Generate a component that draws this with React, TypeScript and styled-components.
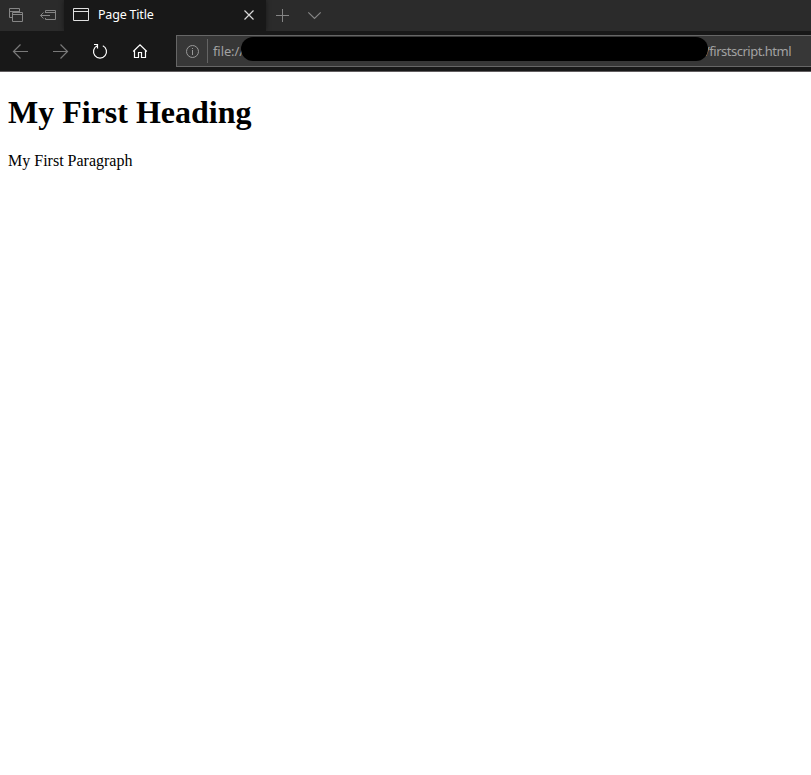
import React from 'react';
import styled, { createGlobalStyle } from 'styled-components';

const GlobalStyle = createGlobalStyle`
  * { box-sizing: border-box; }
  body { margin: 0; background: #fff; overflow: hidden; }
`;

const Browser = styled.div`
  height: 100vh;
  display: flex;
  flex-direction: column;
`;

const TabStrip = styled.div`
  height: 31px;
  flex: none;
  display: flex;
  background: #2b2b2b;
`;

const StripButton = styled.div`
  width: 32px;
  height: 31px;
  flex: none;
`;

const Tab = styled.div`
  width: 202px;
  flex: none;
  display: flex;
  background: #181818;
  box-shadow: 0 0 5px rgba(0, 0, 0, 0.45);
  clip-path: inset(0 -6px);
`;

const TabTitle = styled.span`
  width: 137px;
  padding-left: 2px;
  font: 12.5px/29px 'Noto Sans', sans-serif;
  letter-spacing: -0.2px;
  color: #fff;
  white-space: nowrap;
`;

const NavBar = styled.div`
  height: 41px;
  flex: none;
  display: flex;
  background: #181818;
  border-bottom: 1px solid #625e60;
`;

const NavButton = styled.div`
  width: 40px;
  height: 40px;
  flex: none;
`;

const AddressBar = styled.div`
  flex: 1;
  height: 32px;
  margin: 4px 0 0 16px;
  display: flex;
  align-items: center;
  background: #373737;
  border: 1px solid #666;
  border-right: 0;
  overflow: hidden;
`;

const Divider = styled.div`
  width: 1px;
  height: 24px;
  background: #646464;
`;

const Address = styled.span<{ $tail?: boolean }>`
  flex: none;
  width: ${p => (p.$tail ? 'auto' : '28px')};
  margin-left: ${p => (p.$tail ? '-3px' : '5px')};
  font: 13px/30px 'Noto Sans', sans-serif;
  letter-spacing: ${p => (p.$tail ? '-0.5px' : '-0.1px')};
  color: #a2a2a2;
  white-space: nowrap;
`;

const Redaction = styled.div`
  position: relative;
  width: 467px;
  height: 24px;
  flex: none;
  margin-top: -5px;
  border-radius: 12px;
  background: #000;
`;

const Document = styled.main`
  flex: 1;
  padding: 0 8px;
  font-family: 'Liberation Serif', serif;
  font-size: 16px;
  color: #000;
`;

const Heading = styled.h1`
  margin: 22px 0 21px;
  font-size: 32px;
  line-height: 37px;
`;

const Paragraph = styled.p`
  margin: 0;
  line-height: 18px;
`;

const Icon = styled.svg<{ $tone: string }>`
  display: block;
  flex: none;
  fill: none;
  stroke: ${p => p.$tone};
  stroke-width: 1;
`;

type GlyphProps = { d: string; tone: string; width?: number; height?: number; weight?: number };

const Glyph = ({ d, tone, width = 32, height = 31, weight = 1 }: GlyphProps) => (
  <Icon $tone={tone} width={width} height={height} viewBox={`0 0 ${width} ${height}`}>
    <path d={d} strokeWidth={weight} />
  </Icon>
);

export default function App() {
  return (
    <>
      <GlobalStyle />
      <Browser>
        <TabStrip>
          <StripButton>
            <Glyph tone="#858585" d="M12 17.5H9.5V8.5H19.5V12M9.5 11.5H19.5M12.5 12.5H22.5V21.5H12.5ZM12.5 14.5H22.5" />
          </StripButton>
          <StripButton>
            <Glyph tone="#858585" d="M13.5 13V10.5H23.5V19.5H13.5V18M13.5 12.5H23.5M18 15.5H8.5M11.5 12.5L8.5 15.5L11.5 18.5" />
          </StripButton>
          <Tab>
            <Glyph tone="#e0e0e0" d="M9.5 8.5H24.5V20.5H9.5ZM9.5 11.5H24.5" />
            <TabTitle>Page Title</TabTitle>
            <Glyph tone="#d8d8d8" weight={1.2} d="M11.5 10.5L20.5 19.5M20.5 10.5L11.5 19.5" />
          </Tab>
          <StripButton>
            <Glyph tone="#858585" d="M10 15.5H23M16.5 9V22" />
          </StripButton>
          <StripButton>
            <Glyph tone="#858585" weight={1.2} d="M10.3 12.3L16.5 18.5L22.7 12.3" />
          </StripButton>
        </TabStrip>
        <NavBar>
          <NavButton>
            <Glyph width={40} height={40} tone="#797979" weight={1.2} d="M28 20.5H13.5M20.5 13.5L13.5 20.5L20.5 27.5" />
          </NavButton>
          <NavButton>
            <Glyph width={40} height={40} tone="#797979" weight={1.2} d="M13 20.5H27.5M20.5 13.5L27.5 20.5L20.5 27.5" />
          </NavButton>
          <NavButton>
            <Glyph width={40} height={40} tone="#fff" weight={1.2} d="M17.2 14.8A6.5 6.5 0 1 0 22.8 14.8M14 13.5H17.5V17.5" />
          </NavButton>
          <NavButton>
            <Glyph width={40} height={40} tone="#fff" weight={1.2} d="M13.2 20.5L20 13.8L26.8 20.5M14.5 19.5V26.5H18.5V21.5H21.5V26.5H25.5V19.5" />
          </NavButton>
          <AddressBar>
            <Glyph width={30} height={30} tone="#999" d="M15.5 9.5A6 6 0 1 0 15.5 21.5A6 6 0 1 0 15.5 9.5M15.5 12V13M15.5 14V19" />
            <Divider />
            <Address>file://</Address>
            <Redaction />
            <Address $tail>/firstscript.html</Address>
          </AddressBar>
        </NavBar>
        <Document>
          <Heading>My First Heading</Heading>
          <Paragraph>My First Paragraph</Paragraph>
        </Document>
      </Browser>
    </>
  );
}
